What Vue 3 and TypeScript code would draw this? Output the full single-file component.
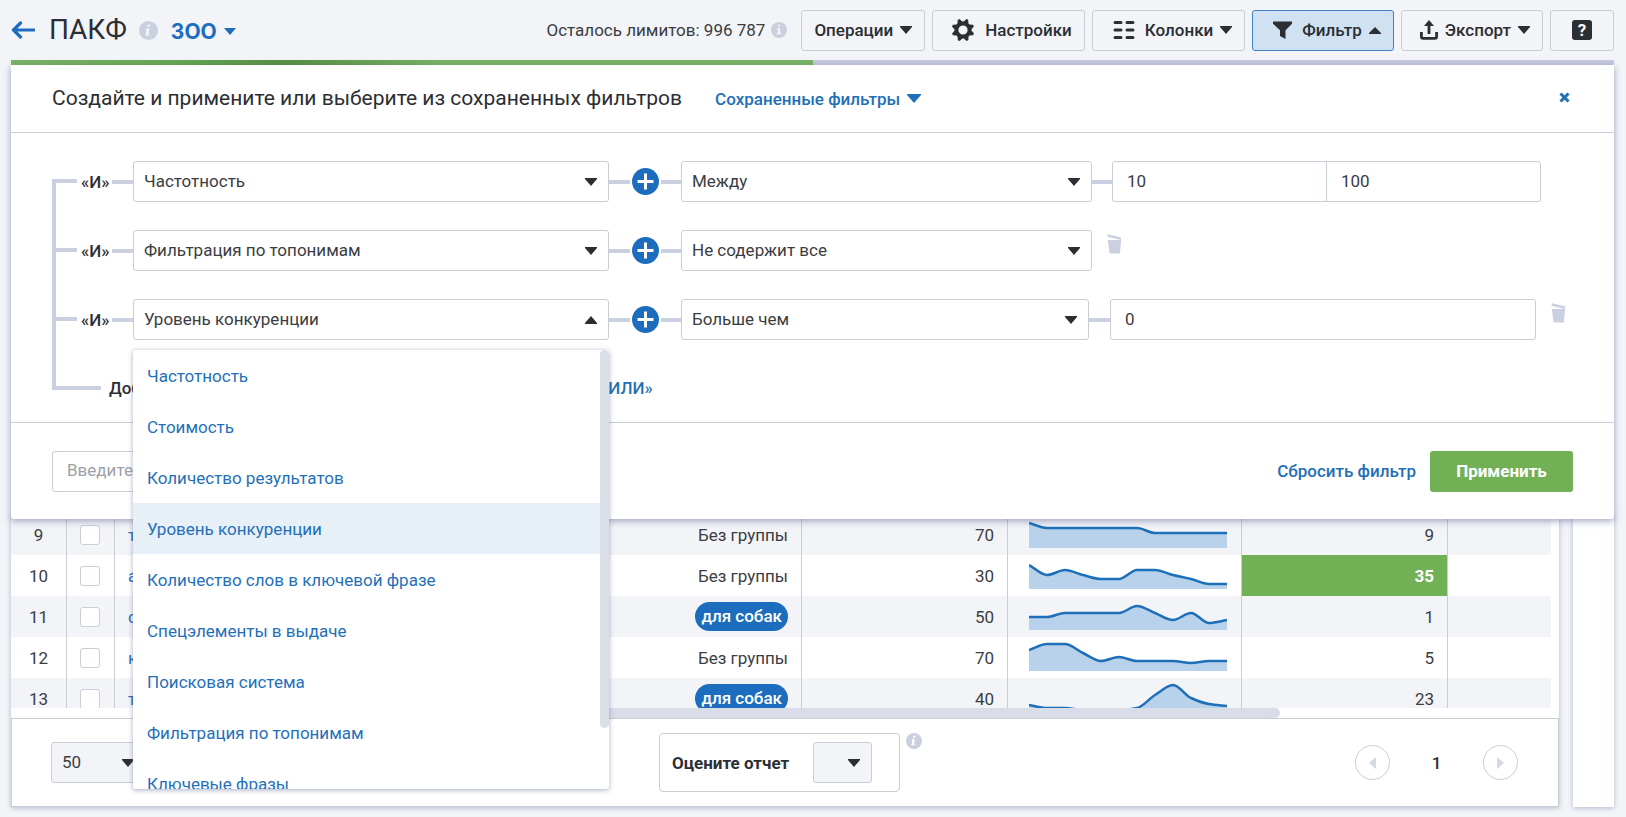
<script setup lang="ts">
import { ref } from 'vue'

interface FilterRow {
  id: number
  field: string
  operator: string
  values: string[]
  removable: boolean
  open: boolean
}

interface KeywordRow {
  index: number
  phrase: string
  group: string | null
  count: number
  trend: number[]
  score: number
  highlighted: boolean
}

const fields: string[] = [
  'Частотность',
  'Стоимость',
  'Количество результатов',
  'Уровень конкуренции',
  'Количество слов в ключевой фразе',
  'Спецэлементы в выдаче',
  'Поисковая система',
  'Фильтрация по топонимам',
  'Ключевые фразы',
]

const operators: string[] = ['Между', 'Не содержит все', 'Больше чем']

const gearTeeth: number[] = [0, 45, 90, 135, 180, 225, 270, 315]

const filters = ref<FilterRow[]>([
  { id: 1, field: 'Частотность', operator: 'Между', values: ['10', '100'], removable: false, open: false },
  { id: 2, field: 'Фильтрация по топонимам', operator: 'Не содержит все', values: [], removable: true, open: false },
  { id: 3, field: 'Уровень конкуренции', operator: 'Больше чем', values: ['0'], removable: true, open: true },
])

const rows: KeywordRow[] = [
  { index: 9, phrase: 'т', group: null, count: 70, trend: [9, 14, 14, 14, 14, 14, 14, 19, 19, 19, 19, 19], score: 9, highlighted: false },
  { index: 10, phrase: 'а', group: null, count: 30, trend: [10, 20, 15, 20, 24, 24, 15, 15, 20, 24, 29, 29], score: 35, highlighted: true },
  { index: 11, phrase: 'с', group: 'для собак', count: 50, trend: [21, 21, 17, 17, 17, 17, 10, 17, 24, 17, 27, 24], score: 1, highlighted: false },
  { index: 12, phrase: 'к', group: null, count: 70, trend: [13, 7, 7, 16, 24, 20, 24, 24, 24, 26, 24, 24], score: 5, highlighted: false },
  { index: 13, phrase: 'т', group: 'для собак', count: 40, trend: [27, 30, 30, 32, 32, 32, 30, 17, 7, 20, 26, 28], score: 23, highlighted: false },
]

const chartWidth = 198
const chartBase = 34

/* Monotone cubic curve through evenly spaced values */
function curve(values: number[]): string {
  const step = chartWidth / (values.length - 1)
  const slopes = values.map((v, i) => {
    if (i === 0) return values[1] - v
    if (i === values.length - 1) return v - values[i - 1]
    const before = v - values[i - 1]
    const after = values[i + 1] - v
    return before * after <= 0 ? 0 : (2 * before * after) / (before + after)
  })
  let d = `M0 ${values[0]}`
  for (let i = 1; i < values.length; i++) {
    const x0 = (i - 1) * step
    const x1 = i * step
    const c0 = values[i - 1] + slopes[i - 1] / 3
    const c1 = values[i] - slopes[i] / 3
    d += ` C${x0 + step / 3} ${c0} ${x1 - step / 3} ${c1} ${x1} ${values[i]}`
  }
  return d
}

function area(values: number[]): string {
  return `${curve(values)} V${chartBase} H0 Z`
}

function choose(row: FilterRow, field: string): void {
  row.field = field
}

function removeFilter(id: number): void {
  filters.value = filters.value.filter((f) => f.id !== id)
}
</script>

<template>
  <div class="page">
    <header class="topbar">
      <a class="back" href="#" aria-label="Назад">
        <svg width="24" height="18" viewBox="0 0 24 18"><path d="M9.500 2 2.500 9l7 7M3 9h20" fill="none" stroke="currentColor" stroke-width="3.200" stroke-linejoin="round" stroke-linecap="round" /></svg>
      </a>
      <h1>ПАКФ</h1>
      <svg class="info info-title" viewBox="0 0 18 18"><circle cx="9" cy="9" r="9" /><path d="M8.300 3.200h2.600l-.5 2.200H7.900zM6.800 7h3.200l-1.100 5h1.200l-.4 1.800H6.100L7.200 8.700H6.400z" fill="#f2f4f8" /></svg>
      <button class="project" type="button">
        ЗОО
        <svg width="12" height="7" viewBox="0 0 12 7"><path d="M0 0h12L6 7z" fill="currentColor" /></svg>
      </button>

      <div class="limits">
        <span>Осталось лимитов: 996 787</span>
        <svg class="info" viewBox="0 0 18 18"><circle cx="9" cy="9" r="9" /><path d="M7.800 3.200h2.600v2.200H7.800zM6.700 7h3.500v5h1.100v1.800H6.600V12h1.100V8.700h-1z" fill="#f2f4f8" /></svg>
      </div>

      <nav class="tools">
        <button class="tool" type="button">
          Операции
          <svg class="caret" viewBox="0 0 12 8"><path d="M0 0h12v1L6 8 0 1z" /></svg>
        </button>
        <button class="tool tool-settings" type="button">
          <svg width="24" height="24" viewBox="0 0 24 24">
            <path d="M12 3.500a8.500 8.500 0 1 0 0 17 8.500 8.500 0 0 0 0-17zm0 3.900a4.600 4.600 0 1 1 0 9.200 4.600 4.600 0 0 1 0-9.200z" fill="currentColor" fill-rule="evenodd" />
            <path v-for="a in gearTeeth" :key="a" d="M9 4.800 11 .6h2l2 4.200z" :transform="`rotate(${a + 22} 12 12)`" fill="currentColor" />
          </svg>
          Настройки
        </button>
        <button class="tool tool-wide" type="button">
          <svg width="22" height="20" viewBox="0 0 22 20"><path d="M2 2.500h6M14 2.500h6M2 10h6M14 10h6M2 17.500h6M14 17.500h6" stroke="currentColor" stroke-width="3" stroke-linecap="round" /></svg>
          Колонки
          <svg class="caret" viewBox="0 0 12 8"><path d="M0 0h12v1L6 8 0 1z" /></svg>
        </button>
        <button class="tool tool-wide tool-active" type="button" aria-expanded="true">
          <svg width="19" height="18" viewBox="0 0 19 18"><path d="M0 .5h19v2.300l-6.500 6.500V18L7 15V9.300L0 2.800z" fill="currentColor" /></svg>
          Фильтр
          <svg class="caret" viewBox="0 0 12 8"><path d="M6 1l6 6v1H0V7z" /></svg>
        </button>
        <button class="tool tool-export" type="button">
          <svg width="18" height="20" viewBox="0 0 18 20"><path d="M1.400 12v4.600q0 1.800 1.800 1.800h11.600q1.800 0 1.800-1.800V12M9 14V3.500" fill="none" stroke="currentColor" stroke-width="2.800" /><path d="M9 0l5 6H4z" fill="currentColor" /></svg>
          Экспорт
          <svg class="caret" viewBox="0 0 12 8"><path d="M0 0h12v1L6 8 0 1z" /></svg>
        </button>
        <button class="tool tool-help" type="button" aria-label="Справка"><span>?</span></button>
      </nav>
    </header>

    <main class="workspace">
      <div class="progress"><div class="progress-done"></div></div>

      <section class="panel">
        <div class="panel-head">
          <h2>Создайте и примените или выберите из сохраненных фильтров</h2>
          <button class="link saved" type="button">
            Сохраненные фильтры
            <svg width="14" height="9" viewBox="0 0 14 9"><path d="M0 0h14v1L7 9 0 1z" fill="currentColor" /></svg>
          </button>
          <button class="close" type="button" aria-label="Закрыть">
            <svg width="11" height="11" viewBox="0 0 11 11"><path d="M1.500 1.500l8 8M9.500 1.500l-8 8" stroke="currentColor" stroke-width="3" /></svg>
          </button>
        </div>

        <div class="conditions">
          <div
            v-for="row in filters"
            :key="row.id"
            class="condition"
            :class="{ 'condition-removable': row.removable && row.values.length > 0 }"
          >
            <div class="joiner">
              <i class="branch"></i>
              <span>«И»</span>
              <i class="wire"></i>
            </div>
            <div class="picker">
              <select v-model="row.field" aria-label="Параметр">
                <option v-for="f in fields" :key="f">{{ f }}</option>
              </select>
              <svg class="caret" viewBox="0 0 12 8">
                <path :d="row.open ? 'M6 0l6 7v1H0V7z' : 'M0 0h12v1L6 8 0 1z'" />
              </svg>
              <div v-if="row.open" class="menu">
                <ul>
                  <li v-for="f in fields" :key="f">
                    <button type="button" :class="{ current: f === row.field }" @click="choose(row, f)">{{ f }}</button>
                  </li>
                </ul>
                <i class="menu-thumb"></i>
              </div>
            </div>
            <div class="plus-link">
              <i class="wire"></i>
              <button type="button" class="plus" aria-label="Добавить">
                <svg width="27" height="27" viewBox="0 0 27 27"><circle cx="13.500" cy="13.500" r="13.500" fill="#1c6dbd" /><path d="M13.500 5.500v16M5.500 13.500h16" stroke="#fff" stroke-width="3" /></svg>
              </button>
              <i class="wire"></i>
            </div>
            <div class="picker">
              <select v-model="row.operator" aria-label="Условие">
                <option v-for="o in operators" :key="o">{{ o }}</option>
              </select>
              <svg class="caret" viewBox="0 0 12 8"><path d="M0 0h12v1L6 8 0 1z" /></svg>
            </div>
            <i v-if="row.values.length" class="wire"></i>
            <div v-if="row.values.length" class="values">
              <input v-for="(_, i) in row.values" :key="i" v-model="row.values[i]" type="text" aria-label="Значение" />
            </div>
            <button v-if="row.removable" class="trash" type="button" aria-label="Удалить" @click="removeFilter(row.id)">
              <svg width="15" height="20" viewBox="0 0 15 20"><path d="M.7 1.500 14 4.700" stroke="#cbd0e0" stroke-width="2.600" /><path d="M.8 6h13.400l-1.400 13.500H2.600z" fill="#cbd0e0" /></svg>
            </button>
          </div>

          <div class="add-row">
            <i class="branch-end"></i>
            <span class="add-text">Добавить условие</span>
            <button class="link" type="button">«ИЛИ»</button>
          </div>
        </div>

        <div class="panel-foot">
          <input class="filter-name" type="text" placeholder="Введите название" aria-label="Название фильтра" />
          <button class="link reset" type="button">Сбросить фильтр</button>
          <button class="apply" type="button">Применить</button>
        </div>
      </section>

      <div class="report">
        <section class="card">
          <div class="scroller">
            <table>
              <colgroup>
                <col class="c-index" />
                <col class="c-check" />
                <col />
                <col class="c-count" />
                <col class="c-trend" />
                <col class="c-score" />
                <col class="c-rest" />
              </colgroup>
              <tbody>
                <tr v-for="row in rows" :key="row.index">
                  <td class="index">{{ row.index }}</td>
                  <td class="check"><input type="checkbox" :aria-label="`Строка ${row.index}`" /></td>
                  <td>
                    <div class="phrase">
                      <a href="#">{{ row.phrase }}</a>
                      <span v-if="row.group" class="tag">{{ row.group }}</span>
                      <span v-else>Без группы</span>
                    </div>
                  </td>
                  <td class="number">{{ row.count }}</td>
                  <td class="trend">
                    <svg width="198" height="41" viewBox="0 0 198 41">
                      <path :d="area(row.trend)" fill="#b8d2ec" />
                      <path :d="curve(row.trend)" fill="none" stroke="#1d6fb8" stroke-width="2.500" />
                    </svg>
                  </td>
                  <td class="number" :class="{ good: row.highlighted }">{{ row.score }}</td>
                  <td></td>
                </tr>
              </tbody>
            </table>
          </div>
          <div class="hscroll"><i></i></div>

          <footer class="pager">
            <div class="picker page-size">
              <select aria-label="Строк на странице"><option>50</option></select>
              <svg class="caret" viewBox="0 0 12 8"><path d="M0 0h12v1L6 8 0 1z" /></svg>
            </div>
            <div class="rate">
              <label for="rate">Оцените отчет</label>
              <div class="picker rate-picker">
                <select id="rate"><option></option></select>
                <svg class="caret" viewBox="0 0 12 8"><path d="M0 0h12v1L6 8 0 1z" /></svg>
              </div>
            </div>
            <svg class="info info-rate" viewBox="0 0 18 18"><circle cx="9" cy="9" r="9" /><path d="M8.300 3.200h2.600l-.5 2.200H7.900zM6.800 7h3.200l-1.100 5h1.200l-.4 1.800H6.100L7.200 8.700H6.400z" fill="#fff" /></svg>
            <div class="pages">
              <button type="button" aria-label="Предыдущая страница">
                <svg width="7" height="12" viewBox="0 0 7 12"><path d="M7 0v12L0 6z" fill="#d5d9e2" /></svg>
              </button>
              <span>1</span>
              <button type="button" aria-label="Следующая страница">
                <svg width="7" height="12" viewBox="0 0 7 12"><path d="M0 0v12l7-6z" fill="#d5d9e2" /></svg>
              </button>
            </div>
          </footer>
        </section>
        <aside class="side"></aside>
      </div>
    </main>
  </div>
</template>

<style>
body {
  margin: 0;
  background: #f2f4f8;
}
</style>

<style scoped>
.page {
  --line: #c9cdd6;
  --wire: #cbd0e0;
  --blue: #1f70b8;
  --ink: #2b2e33;
  --green: #72b056;
  box-sizing: border-box;
  display: flex;
  flex-direction: column;
  min-height: 100vh;
  padding: 0 12px 10px 11px;
  color: var(--ink);
  font: 400 17px/20px Roboto, "Liberation Sans", sans-serif;
}

.page *,
.page *::before {
  box-sizing: border-box;
}

button,
input,
select {
  margin: 0;
  color: inherit;
  font: inherit;
}

button {
  display: inline-flex;
  align-items: center;
  padding: 0;
  border: 0;
  background: none;
  cursor: pointer;
}

svg {
  flex: none;
  display: block;
}

.caret {
  width: 12px;
  height: 8px;
  fill: var(--ink);
}

.info {
  width: 16px;
  height: 16px;
  fill: #cbd0de;
}

/* Top bar */
.topbar {
  display: flex;
  align-items: center;
  height: 60px;
}

.back {
  color: #1c6dbd;
}

h1 {
  margin: 0 12px 0 14px;
  font-size: 28px;
  font-weight: 400;
  line-height: 32px;
}

.info-title {
  width: 19px;
  height: 19px;
}

.project {
  gap: 7px;
  margin-left: 13px;
  padding-top: 3px;
  color: #1c6dbd;
  font: 700 21px/24px Inter, "Open Sans", sans-serif;
}

.limits {
  display: flex;
  align-items: center;
  gap: 6px;
  margin: 0 14px 0 auto;
  color: #3a3d42;
}

.tools {
  display: flex;
  gap: 7px;
}

.tool {
  justify-content: center;
  gap: 7px;
  height: 41px;
  padding: 0 12px;
  border: 1px solid var(--line);
  border-radius: 3px;
  font-weight: 500;
}

.tool-wide {
  padding-left: 20px;
}

.tool-settings {
  padding-left: 18px;
}

.tool-wide svg:first-child,
.tool-settings svg {
  margin-right: 3px;
}

.tool-export {
  padding-left: 18px;
}

.tool-active {
  border-color: #3f83c2;
  background: #d0e2f2;
}

.tool-help {
  width: 64px;
}

.tool-help span {
  width: 20px;
  border-radius: 3px;
  background: var(--ink);
  color: #fff;
  font-weight: 700;
}

/* Filter panel */
.workspace {
  flex: 1;
  display: flex;
  flex-direction: column;
}

.progress {
  height: 5px;
  background: #c6cbdf;
}

.progress-done {
  width: 50%;
  height: 100%;
  background: linear-gradient(90deg, #7ab562, #68a850 20%, #55913f 34%, #7ab562 54%, #78b560);
}

.panel {
  position: relative;
  z-index: 2;
  border-radius: 0 0 3px 3px;
  background: #fff;
  box-shadow: 0 2px 7px rgba(80, 92, 140, 0.55);
}

.panel-head {
  display: flex;
  align-items: center;
  height: 68px;
  padding: 0 44px 2px 41px;
  border-bottom: 1px solid var(--line);
}

h2 {
  margin: 0;
  font-size: 21px;
  font-weight: 400;
  line-height: 26px;
}

.link {
  color: var(--blue);
  font-weight: 500;
}

.saved {
  gap: 7px;
  margin-left: 33px;
  padding-top: 2px;
}

.close {
  margin-left: auto;
  color: var(--blue);
}

.conditions {
  padding: 28px 0 13px 41px;
  border-bottom: 1px solid var(--line);
}

.condition {
  display: grid;
  grid-template-columns: 81px 476fr 72px 411fr 20px 429fr 73px;
  padding-bottom: 28px;
}

.condition-removable {
  grid-template-columns: 81px 476fr 72px 408fr 21px 426fr 78px;
}

.wire {
  align-self: center;
  flex: 1;
  height: 4px;
  background: var(--wire);
}

.joiner {
  display: flex;
  align-items: center;
  gap: 4px;
  font-weight: 500;
}

.joiner span {
  width: 27px;
  text-align: center;
}

.branch {
  align-self: stretch;
  width: 25px;
  margin: 18px 0 -46px;
  border: solid var(--wire);
  border-width: 4px 0 0 4px;
}

.picker {
  position: relative;
  display: grid;
  align-items: center;
}

.picker > select,
.picker > .caret {
  grid-area: 1 / 1;
}

.picker > .caret {
  justify-self: end;
  margin-right: 12px;
  pointer-events: none;
}

select,
input[type="text"] {
  appearance: none;
  width: 100%;
  min-width: 0;
  height: 41px;
  padding: 0 10px 2px;
  border: 1px solid var(--line);
  border-radius: 3px;
  outline: 0;
  background: #fff;
  color: #3a3d42;
}

input[type="text"] {
  padding: 0 14px 2px;
}

.plus-link {
  display: flex;
  align-items: center;
}

.plus {
  margin: 0 2px;
}

.values {
  display: flex;
}

.values input + input {
  margin-left: -1px;
  border-radius: 0 3px 3px 0;
}

.values input:not(:last-child) {
  border-radius: 3px 0 0 3px;
}

.trash {
  grid-column: 5 / -1;
  align-self: start;
  justify-self: start;
  margin: 4px 0 0 15px;
}

.condition-removable .trash {
  grid-column: 7;
}

.menu {
  position: absolute;
  top: 51px;
  left: 0;
  z-index: 3;
  display: flex;
  width: 100%;
  height: 439px;
  overflow: hidden;
  border-radius: 3px;
  background: #fff;
  box-shadow: 0 1px 5px rgba(80, 92, 140, 0.5);
}

.menu ul {
  flex: 1;
  margin: 0;
  padding: 0;
  list-style: none;
}

.menu button {
  width: 100%;
  height: 51px;
  padding: 0 14px;
  color: var(--blue);
}

.menu button.current {
  background: #e7eff7;
}

.menu-thumb {
  width: 9px;
  height: 378px;
  border-radius: 5px;
  background: #d9dee9;
}

.add-row {
  display: flex;
  align-items: center;
  height: 41px;
  padding-bottom: 2px;
  font-weight: 500;
}

.branch-end {
  width: 49px;
  height: 4px;
  background: var(--wire);
}

.add-text {
  width: 484px;
  margin: 0 7px 0 8px;
}

.panel-foot {
  display: flex;
  align-items: center;
  height: 96px;
  padding: 0 41px;
}

.filter-name::placeholder {
  color: #9da1a8;
}

.panel-foot .filter-name {
  width: 480px;
}

.reset {
  margin-left: auto;
}

.apply {
  justify-content: center;
  width: 143px;
  height: 41px;
  margin-left: 14px;
  border-radius: 3px;
  background: var(--green);
  color: #fff;
  font-weight: 700;
}

/* Report */
.report {
  flex: 1;
  display: flex;
  gap: 14px;
  margin-top: -5px;
}

.card,
.side {
  background: #fff;
  box-shadow: 0 1px 5px rgba(80, 92, 140, 0.4);
}

.card {
  flex: 1;
  display: flex;
  flex-direction: column;
  min-width: 0;
}

.side {
  width: 41px;
}

.scroller {
  flex: 1 1 0;
  min-height: 120px;
  padding-right: 8px;
  overflow: hidden;
}

table {
  width: 100%;
  table-layout: fixed;
  border-spacing: 0;
  color: #3a3d42;
}

.c-index {
  width: 56px;
}

.c-check {
  width: 48px;
}

.c-count,
.c-score {
  width: 206px;
}

.c-trend {
  width: 234px;
}

.c-rest {
  width: 103px;
}

td {
  height: 41px;
  padding: 0;
  border-right: 1px solid var(--line);
}

td:last-child {
  border-right: 0;
}

tr:nth-child(odd) {
  background: #f3f4f8;
}

.index {
  text-align: center;
}

.check input {
  appearance: none;
  display: block;
  width: 20px;
  height: 20px;
  margin: 0 13px;
  border: 1px solid var(--line);
  border-radius: 3px;
  background: #fff;
}

.phrase {
  display: flex;
  align-items: center;
  justify-content: space-between;
  padding: 0 13px;
}

.phrase a {
  color: var(--blue);
  text-decoration: none;
}

.tag {
  padding: 4px 6px 5px;
  border-radius: 15px;
  background: #1c6dbd;
  color: #fff;
  font-weight: 500;
}

.number {
  padding-right: 13px;
  text-align: right;
}

.good {
  background: var(--green);
  color: #fff;
  font-weight: 700;
}

.trend svg {
  margin: 0 auto 0 21px;
}

.hscroll {
  height: 10px;
}

.hscroll i {
  display: block;
  width: 82%;
  height: 100%;
  border-radius: 5px;
  background: linear-gradient(90deg, #fff 20%, #d9dde7 20%);
}

.pager {
  display: flex;
  align-items: center;
  height: 89px;
  padding: 0 40px 0 39px;
  border: 1px solid var(--line);
}

.pager select {
  background: #f2f4f8;
}

.page-size {
  width: 95px;
}

.rate {
  display: flex;
  align-items: center;
  height: 59px;
  margin-left: 513px;
  padding: 0 27px 0 12px;
  border: 1px solid var(--line);
  border-radius: 4px;
  font-weight: 700;
}

.rate-picker {
  width: 59px;
  margin-left: 24px;
}

.info-rate {
  align-self: flex-start;
  margin: 14px 0 0 6px;
}

.pages {
  display: flex;
  align-items: center;
  margin-left: auto;
  font-weight: 500;
}

.pages button {
  justify-content: center;
  width: 35px;
  height: 35px;
  border: 1px solid var(--line);
  border-radius: 50%;
}

.pages span {
  width: 93px;
  text-align: center;
}
</style>
